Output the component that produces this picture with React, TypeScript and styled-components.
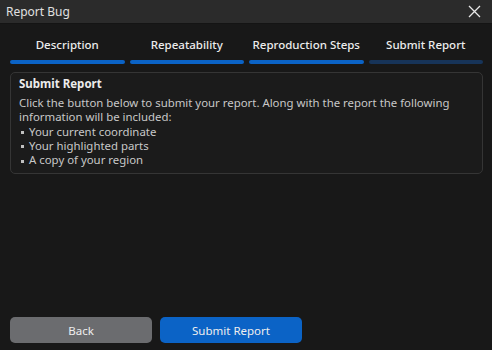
import React from "react";
import styled, { createGlobalStyle } from "styled-components";

const GlobalStyle = createGlobalStyle`
  html, body {
    margin: 0;
    padding: 0;
    background: #181818;
  }
  * {
    box-sizing: border-box;
  }
`;

const Window = styled.div`
  width: 492px;
  height: 350px;
  display: flex;
  flex-direction: column;
  background: #181818;
  font-family: "Noto Sans", "DejaVu Sans", sans-serif;
  color: #d0d0d0;
  overflow: hidden;
`;

const TitleBar = styled.div`
  height: 24px;
  flex: none;
  display: flex;
  align-items: center;
  justify-content: space-between;
  padding: 0 11px 0 6px;
  background: #2b2b2b;
  border-bottom: 1px solid #141414;
  font-size: 12px;
  color: #e0e0e0;
`;

const CloseButton = styled.div`
  width: 14px;
  height: 14px;
  display: flex;
  align-items: center;
  justify-content: center;
`;

const Steps = styled.div`
  display: grid;
  grid-template-columns: repeat(4, 1fr);
  gap: 5px;
  padding: 12px 9px 0 10px;
`;

const Step = styled.div`
  display: flex;
  flex-direction: column;
  align-items: center;
  gap: 6px;
`;

const StepLabel = styled.span`
  font-size: 11.5px;
  line-height: 18px;
  font-weight: 500;
  color: #ececec;
`;

const StepBar = styled.div<{ active: boolean }>`
  width: 100%;
  height: 4px;
  border-radius: 2px;
  background: ${(p) => (p.active ? "#0b63c6" : "#173459")};
`;

const Panel = styled.div`
  margin: 8px 9px 0 10px;
  padding: 3px 8px 6px;
  border: 1px solid #353535;
  border-radius: 5px;
  background: #1b1b1b;
`;

const PanelTitle = styled.div`
  font-size: 11.5px;
  font-weight: 700;
  line-height: 16px;
  color: #ececec;
  margin-bottom: 4px;
`;

const PanelText = styled.p`
  margin: 0;
  font-size: 11.4px;
  line-height: 14.25px;
  color: #c8c8c8;
`;

const Bullets = styled.ul`
  margin: 0;
  padding: 0;
  list-style: none;
  font-size: 11.4px;
  line-height: 14.25px;
  color: #c8c8c8;
`;

const Bullet = styled.li`
  display: flex;
  align-items: center;
  gap: 5px;
  &::before {
    content: "";
    width: 3px;
    height: 3px;
    margin-left: 2px;
    margin-top: 2px;
    background: #c0c0c0;
  }
`;

const Footer = styled.div`
  margin-top: auto;
  display: flex;
  gap: 8px;
  padding: 0 10px 7px;
`;

const Button = styled.button<{ primary?: boolean }>`
  width: 142px;
  height: 26px;
  border: none;
  border-radius: 5px;
  font-family: inherit;
  font-size: 11.5px;
  color: #eeeeee;
  background: ${(p) => (p.primary ? "#0b63c6" : "#6b6c6f")};
  cursor: pointer;
`;

const steps = ["Description", "Repeatability", "Reproduction Steps", "Submit Report"];
const items = ["Your current coordinate", "Your highlighted parts", "A copy of your region"];

export default function App() {
  return (
    <>
      <GlobalStyle />
      <Window>
        <TitleBar>
          <span>Report Bug</span>
          <CloseButton>
            <svg width="13" height="13" viewBox="0 0 13 13">
              <path d="M1 1 L12 12 M12 1 L1 12" stroke="#e8e8e8" strokeWidth="1.3" />
            </svg>
          </CloseButton>
        </TitleBar>
        <Steps>
          {steps.map((s, i) => (
            <Step key={s}>
              <StepLabel>{s}</StepLabel>
              <StepBar active={i < 3} />
            </Step>
          ))}
        </Steps>
        <Panel>
          <PanelTitle>Submit Report</PanelTitle>
          <PanelText>
            Click the button below to submit your report. Along with the report the following
            information will be included:
          </PanelText>
          <Bullets>
            {items.map((t) => (
              <Bullet key={t}>{t}</Bullet>
            ))}
          </Bullets>
        </Panel>
        <Footer>
          <Button>Back</Button>
          <Button primary>Submit Report</Button>
        </Footer>
      </Window>
    </>
  );
}
